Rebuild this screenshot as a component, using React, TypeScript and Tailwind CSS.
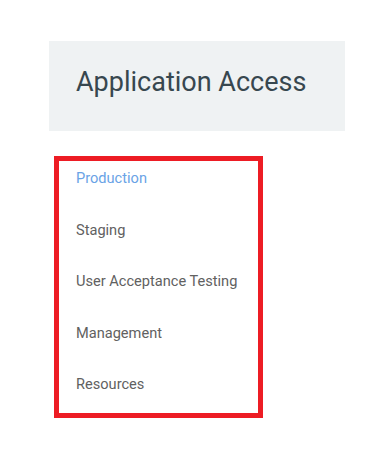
import React from 'react';

const links = ['Production', 'Staging', 'User Acceptance Testing', 'Management', 'Resources'];

export default function App() {
  return (
    <div className="min-h-[453px] bg-white pl-[49px] pt-[41px] font-['Roboto',sans-serif]">
      <div className="w-[296px] bg-[#eff2f3] pl-[27px] pt-[26px] pb-[34px]">
        <h1 className="text-[27px] leading-[30px] text-[#37474f]">Application Access</h1>
      </div>
      <nav className="mt-[25px] ml-[5px] w-[209px] border-[5px] border-[#ed1c24] pl-[17px] pt-[7px] pb-[19px]">
        <ul className="flex flex-col gap-[31.5px]">
          {links.map((name, i) => (
            <li
              key={name}
              className={
                i === 0
                  ? 'text-[14.6px] leading-5 text-[#6aa3e6]'
                  : 'text-[14.6px] leading-5 text-[#616161]'
              }
            >
              {name}
            </li>
          ))}
        </ul>
      </nav>
    </div>
  );
}
